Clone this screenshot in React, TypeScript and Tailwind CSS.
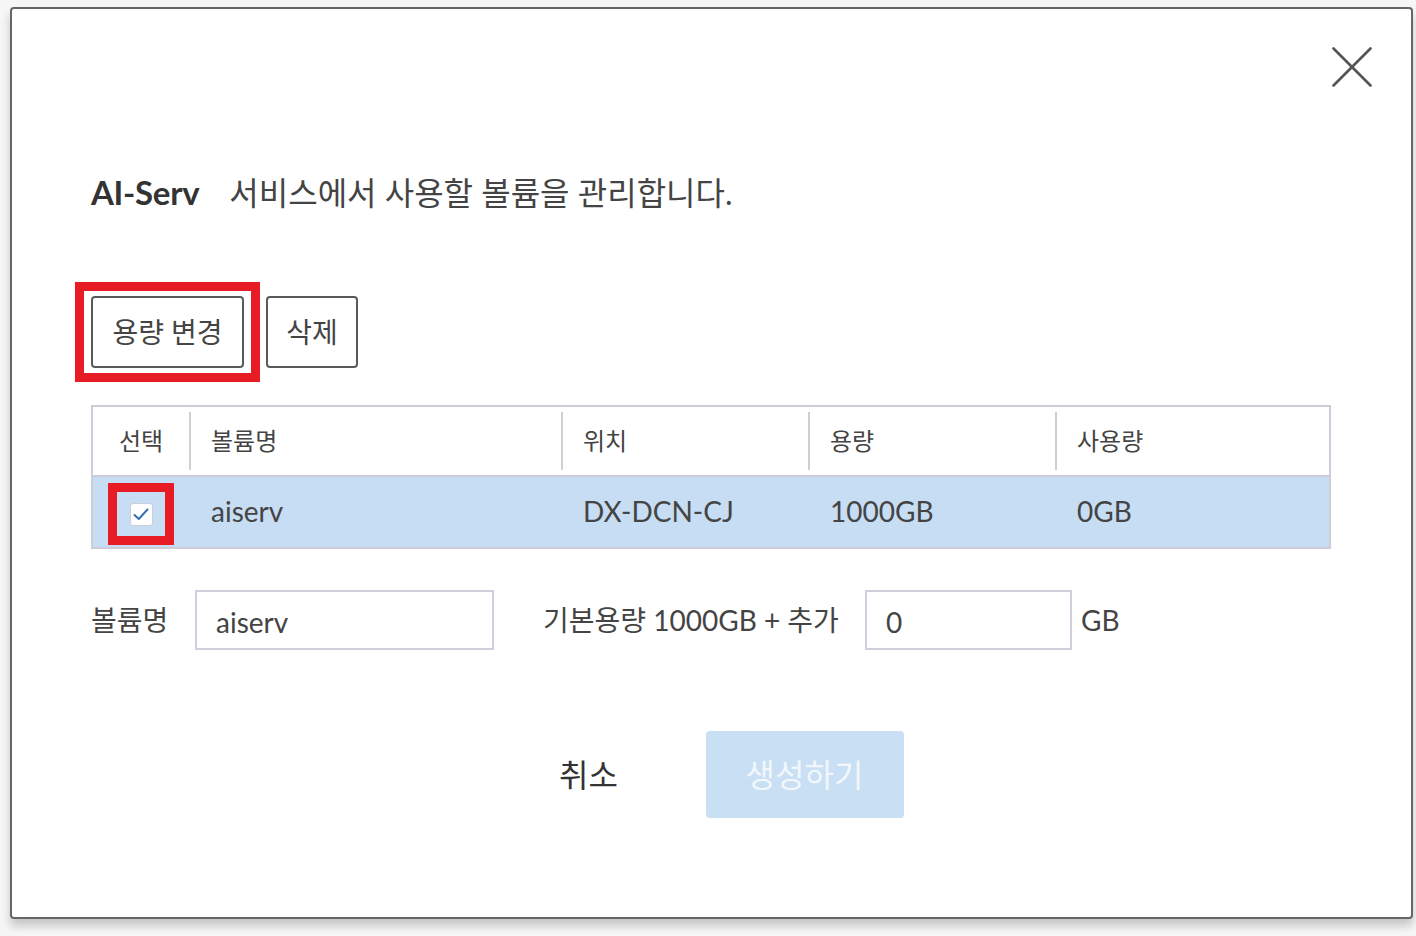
import { useState } from "react";

const FONT = { fontFamily: 'Lato, "Noto Sans CJK KR", sans-serif' };

type Volume = {
  name: string;
  location: string;
  size: string;
  used: string;
};

const volumes: Array<Volume> = [
  { name: "aiserv", location: "DX-DCN-CJ", size: "1000GB", used: "0GB" },
];

const CloseIcon = () => (
  <svg width="40" height="40" viewBox="0 0 40 40" fill="none">
    <path
      d="M1.5 1.5L38.5 38.5M38.5 1.5L1.5 38.5"
      stroke="#555"
      strokeWidth="2.6"
      strokeLinecap="round"
    />
  </svg>
);

const Checkbox = ({ checked }: { checked: boolean }) => (
  <div className="flex h-[23px] w-[23px] items-center justify-center rounded-[3px] border border-[#c9ced8] bg-white">
    {checked && (
      <svg width="16" height="13" viewBox="0 0 16 13" fill="none">
        <path
          d="M1.5 7L5.8 11L14.5 1.5"
          stroke="#3b6db3"
          strokeWidth="2"
          strokeLinecap="round"
          strokeLinejoin="round"
        />
      </svg>
    )}
  </div>
);

export default function App() {
  const [name, setName] = useState("aiserv");
  const [extra, setExtra] = useState("0");
  const [selected, setSelected] = useState(true);

  return (
    <div
      className="min-h-[936px] w-[1416px] bg-[#f6f6f6] pl-[10px] pt-[7px]"
      style={FONT}
    >
      <div className="flex h-[912px] w-[1403px] flex-col rounded-[4px] border-2 border-[#666] bg-white shadow-[0_7px_10px_rgba(0,0,0,0.2)]">
        {/* close */}
        <div className="flex justify-end pr-[39px] pt-[38px]">
          <button className="h-[40px] w-[40px]">
            <CloseIcon />
          </button>
        </div>

        <div className="flex flex-col pl-[79px] pr-[80px]">
          {/* title */}
          <div className="mt-[86px] flex h-[40px] items-center text-[#333]">
            <span className="text-[33px] font-bold tracking-[-0.3px]">
              AI-Serv
            </span>
            <span className="ml-[30px] text-[32px] text-[#444]">
              서비스에서 사용할 볼륨을 관리합니다.
            </span>
          </div>

          {/* actions */}
          <div className="mt-[69px] flex items-center gap-[6px]">
            <div className="-ml-[16px] border-[9px] border-[#e81c24] px-[7px] py-[5px]">
              <button className="h-[72px] w-[153px] rounded-[4px] border-2 border-[#5a5a5a] bg-white text-[28px] text-[#444]">
                용량 변경
              </button>
            </div>
            <button className="h-[72px] w-[92px] rounded-[4px] border-2 border-[#5a5a5a] bg-white text-[28px] text-[#444]">
              삭제
            </button>
          </div>

          {/* table */}
          <div className="mt-[23px] border-2 border-[#cdcdda]">
            <div className="flex h-[70px] items-center border-b-2 border-[#cdcdda] bg-white text-[24px] text-[#444]">
              <div className="flex h-[58px] w-[96px] items-center justify-center">
                선택
              </div>
              <div className="flex h-[58px] w-[372px] items-center border-l-2 border-[#cfcfcf] pl-[20px]">
                볼륨명
              </div>
              <div className="flex h-[58px] w-[247px] items-center border-l-2 border-[#cfcfcf] pl-[20px]">
                위치
              </div>
              <div className="flex h-[58px] w-[247px] items-center border-l-2 border-[#cfcfcf] pl-[20px]">
                용량
              </div>
              <div className="flex h-[58px] flex-1 items-center border-l-2 border-[#cfcfcf] pl-[20px]">
                사용량
              </div>
            </div>
            {volumes.map((v) => (
              <div
                key={v.name}
                className="flex h-[70px] items-center bg-[#c6ddf3] text-[28px] text-[#444]"
              >
                <div className="flex w-[96px] justify-center">
                  <button
                    className="mt-[4px] flex h-[62px] w-[66px] items-center justify-center border-[9px] border-[#e81c24]"
                    onClick={() => setSelected((s) => !s)}
                  >
                    <Checkbox checked={selected} />
                  </button>
                </div>
                <div className="w-[372px] pb-[3px] pl-[22px]">{v.name}</div>
                <div className="w-[247px] pb-[3px] pl-[22px]">{v.location}</div>
                <div className="w-[247px] pb-[3px] pl-[22px]">{v.size}</div>
                <div className="flex-1 pb-[3px] pl-[22px]">{v.used}</div>
              </div>
            ))}
          </div>

          {/* form */}
          <div className="mt-[41px] flex items-center text-[#444]">
            <span className="w-[104px] text-[28px]">볼륨명</span>
            <input
              className="h-[60px] w-[299px] border-2 border-[#cfcfdc] bg-white pl-[19px] pt-[4px] text-[28px] text-[#444] outline-none"
              value={name}
              onChange={(e) => setName(e.target.value)}
              style={FONT}
            />
            <span className="ml-[49px] w-[322px]">
              <span className="text-[28px]">기본용량</span>
              <span className="text-[28px]"> 1000GB + </span>
              <span className="text-[28px]">추가</span>
            </span>
            <input
              className="h-[60px] w-[207px] border-2 border-[#cfcfdc] bg-white pl-[19px] pt-[4px] text-[28px] text-[#444] outline-none"
              value={extra}
              onChange={(e) => setExtra(e.target.value)}
              style={FONT}
            />
            <span className="ml-[9px] text-[28px]">GB</span>
          </div>

          {/* footer */}
          <div className="mt-[81px] flex items-center justify-center gap-[52px] pl-[5px]">
            <button className="h-[87px] w-[130px] text-[32px] text-[#333]">
              취소
            </button>
            <button className="h-[87px] w-[198px] rounded-[4px] bg-[#c9dff3] text-[32px] text-[#f2f7fc]">
              생성하기
            </button>
          </div>
        </div>
      </div>
    </div>
  );
}
